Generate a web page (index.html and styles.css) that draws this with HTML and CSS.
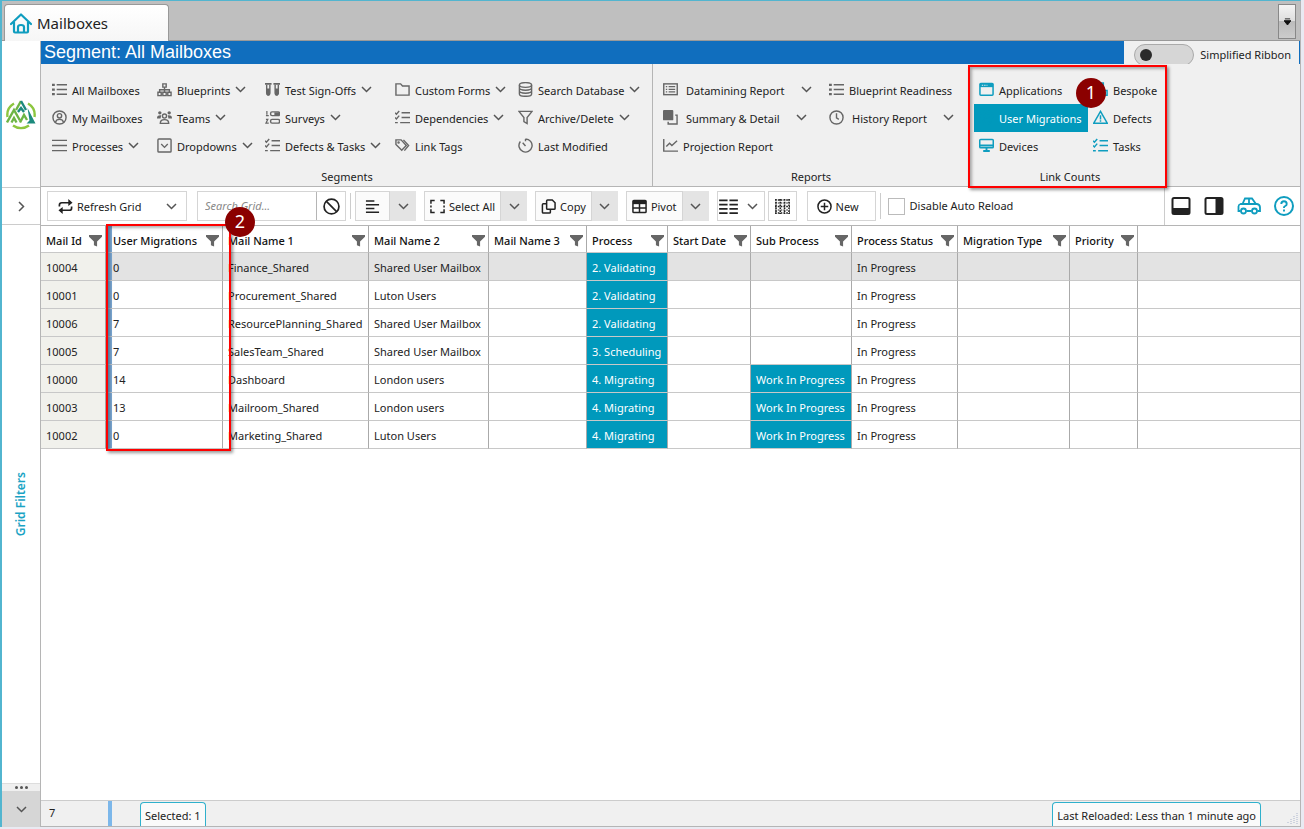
FILE: index.html
```html
<!DOCTYPE html>
<html lang="en">
<head>
  <meta charset="UTF-8">
  <meta name="viewport" content="width=device-width, initial-scale=1.0">
  <title>Mailboxes</title>
  <link rel="stylesheet" href="styles.css">
</head>
<body>
  <!-- icon sprite -->
  <svg class="sprite" aria-hidden="true">
    <symbol id="chev" viewBox="0 0 11 11"><path d="M1 3l4.500 4.500L10 3"/></symbol>
    <symbol id="list" viewBox="0 0 16 16"><path d="M5 3h11M5 8h11M5 13h11"/><path d="M0 3h3M0 8h3M0 13h3" stroke-width="2.400"/></symbol>
    <symbol id="lines" viewBox="0 0 16 16"><path d="M0 2.500h16M0 8h16M0 13.500h16"/></symbol>
    <symbol id="user" viewBox="0 0 16 16"><circle cx="8" cy="8" r="7"/><circle cx="8" cy="6.200" r="2.300"/><path d="M3.800 13c.4-2 1.600-3 4.200-3s3.800 1 4.200 3"/></symbol>
    <symbol id="tree" viewBox="0 0 16 16"><path d="M6.200 2h3.600v3.500H6.200zM1 11h3.500v3.500H1zM6.200 11h3.600v3.500H6.200zM11.500 11H15v3.500h-3.500zM8 5.500V11M2.800 11V8.300h10.400V11"/></symbol>
    <symbol id="team" viewBox="0 0 16 16"><g class="solid"><circle cx="3" cy="3" r="1.800"/><circle cx="13" cy="3" r="1.800"/><path d="M0 9c0-2.500 1-3.500 4.500-3.300L3.800 9zM16 9c0-2.500-1-3.500-4.500-3.300L12.200 9z"/></g><circle cx="8" cy="6.500" r="2.200"/><path d="M3.500 14.300c0-3 1.500-4 4.500-4s4.500 1 4.500 4z"/></symbol>
    <symbol id="drop" viewBox="0 0 16 16"><rect x="1" y="1" width="14" height="14" rx="1"/><path d="M4.500 6.500L8 10l3.500-3.500"/></symbol>
    <symbol id="tubes" viewBox="0 0 16 16"><path d="M0 2h7M9 2h7" stroke-width="2"/><path d="M1.800 3v9a1.700 1.700 0 003.400 0V3M10.800 3v9a1.700 1.700 0 003.400 0V3"/><path class="solid" d="M1.800 7h3.400v6a1.700 1.700 0 01-3.400 0zM10.800 7h3.400v6a1.700 1.700 0 01-3.400 0z"/></symbol>
    <symbol id="survey" viewBox="0 0 16 16"><path d="M2 1v4M1 6h3M1 10h2l-2 4h3" stroke-width="1.300"/><rect x="6" y="2" width="9.500" height="4" rx="1.500"/><path d="M10 4h5" stroke-width="3"/><rect x="6" y="10" width="9.500" height="4" rx="1.500"/></symbol>
    <symbol id="check" viewBox="0 0 16 16"><path d="M0 3l1.500 1.500L4.500 1M0 8l1.500 1.500L4.500 6M0 13.500h3M7 3h9M7 8h9M5.500 13.500H16"/></symbol>
    <symbol id="folder" viewBox="0 0 16 16"><path d="M1 14V2h5l2 2.300h7V14z"/></symbol>
    <symbol id="tags" viewBox="0 0 16 16"><path d="M1 2h5.500l5.500 6-4.800 5L1 7zM9 2l5.500 6-4.500 5.500"/><circle cx="3.800" cy="4.800" r=".6"/></symbol>
    <symbol id="db" viewBox="0 0 16 16"><ellipse cx="8" cy="3.200" rx="6.500" ry="2.500"/><path d="M1.500 3.200v9.600c0 3.300 13 3.300 13 0V3.200M1.500 6.500c0 3 13 3 13 0M1.500 9.700c0 3 13 3 13 0"/></symbol>
    <symbol id="funnel" viewBox="0 0 16 16"><path d="M1 1.500h14L9.700 8v6.500l-3.400-2V8z"/></symbol>
    <symbol id="timer" viewBox="0 0 16 16"><path d="M8 1a7 7 0 11-5.500 2.700M8 1v2.500M5 5l3 3.500"/></symbol>
    <symbol id="report" viewBox="0 0 16 16"><rect x=".8" y="2" width="14.400" height="11.500"/><path d="M6 5h7M6 7.800h7M6 10.600h7M3 5h1.500M3 7.800h1.500M3 10.600h1.500" stroke-width="1.300"/></symbol>
    <symbol id="stack" viewBox="0 0 16 16"><rect class="solid" x="0" y="0" width="11" height="11" rx="1"/><path d="M13 5.500h2V15H5.500v-2.500"/></symbol>
    <symbol id="chart" viewBox="0 0 16 16"><path d="M.8 1v13H16M3.500 9l3.500-3.500L9.500 8 15 3"/></symbol>
    <symbol id="clock" viewBox="0 0 16 16"><circle cx="8" cy="8" r="7"/><path d="M8 3.500V8.500l2.500 1.500"/></symbol>
    <symbol id="window" viewBox="0 0 16 16"><rect x="1" y="1.500" width="14" height="12.500" rx="1"/><path d="M1 3.500h14" stroke-width="4"/><path d="M3 3.500h6" stroke="#f0f0f0" stroke-width="1" stroke-dasharray="1.500 1"/></symbol>
    <symbol id="monitor" viewBox="0 0 16 16"><rect x=".8" y="1.500" width="14.400" height="9" rx="1"/><path d="M1 8h14M4.500 13.800h7M8 10.500v3" stroke-width="2"/></symbol>
    <symbol id="blocks" viewBox="0 0 16 16"><path d="M5 1h6v6H5zM1 9h6v5H1zM9 9h6v5H9z"/></symbol>
    <symbol id="warn" viewBox="0 0 16 16"><path d="M8 1.500L15.200 14H.8zM8 5.500v4.500M8 11v1.500" stroke-width="1.600"/></symbol>
    <symbol id="filter" viewBox="0 0 14 14"><path class="solid" d="M0 1h14v2L8.700 8v5.500l-3.400-1.500V8L0 3z"/></symbol>
    <symbol id="refresh" viewBox="0 0 16 16"><path d="M1.500 8V6.500q0-2.500 2.500-2.500h8M14.500 8v1.500q0 2.500-2.500 2.500H4" stroke-width="1.800"/><path class="solid" d="M11 0l4.500 4L11 7.500zM5 8.500L.5 12 5 16z"/></symbol>
    <symbol id="ban" viewBox="0 0 16 16"><circle cx="8" cy="8" r="7"/><path d="M3 3l10 10"/></symbol>
    <symbol id="align" viewBox="0 0 16 16"><path d="M1 2h9M1 6h14M1 10h9M1 14h14"/></symbol>
    <symbol id="expand" viewBox="0 0 16 16"><path d="M1 5V1.500h4M11 1.500h4V5M15 11v3.500h-4M5 14.500H1V11M1 7v2M15 7v2"/></symbol>
    <symbol id="copy" viewBox="0 0 16 16"><path d="M7 1h5l3 3v6q0 1-1 1H7q-1 0-1-1V2q0-1 1-1zM6 5H2.500q-1 0-1 1v8q0 1 1 1H9q1 0 1-1v-3"/></symbol>
    <symbol id="pivot" viewBox="0 0 16 16"><rect x="1" y="1.500" width="14" height="13" rx="1"/><path d="M1 3.500h14" stroke-width="4"/><path d="M8 4v10M1 9.500h14"/></symbol>
    <symbol id="cols" viewBox="0 0 20 16"><path d="M0 1.500h9M11 1.500h9M0 6h9M11 6h9M0 10.500h9M11 10.500h9M0 15h9M11 15h9" stroke-width="1.800"/></symbol>
    <symbol id="dots" viewBox="0 0 15 15"><path d="M0 1h15M0 7.500h15M0 14h15M1 0v15M5.300 0v15M9.600 0v15M14 0v15" stroke-width="1.600" stroke-dasharray="1.700 1.100"/><path d="M0 4h15M0 11h15" stroke-width="1" stroke-dasharray="1.700 1.100"/></symbol>
    <symbol id="plus" viewBox="0 0 16 16"><circle cx="8" cy="8" r="7"/><path d="M8 4v8M4 8h8"/></symbol>
    <symbol id="panel-b" viewBox="0 0 20 20"><rect x="1.500" y="2" width="17" height="16" rx="1.500" stroke-width="2"/><path class="solid" d="M1.500 12h17v6h-17z"/></symbol>
    <symbol id="panel-r" viewBox="0 0 20 20"><rect x="1.500" y="2" width="17" height="16" rx="1.500" stroke-width="2"/><path class="solid" d="M11.500 2h7v16h-7z"/></symbol>
    <symbol id="car" viewBox="0 0 24 18"><path d="M3.500 14H1.500V9.500q0-2 2-2.500h2L8 1.500h7L19 7h1q3 .5 3 3.500V14h-2.500M9.500 14h5M5 7h14M12 1.500V7" stroke-width="1.800"/><circle cx="6.500" cy="14" r="2.500" stroke-width="1.800"/><circle cx="17.500" cy="14" r="2.500" stroke-width="1.800"/></symbol>
    <symbol id="help" viewBox="0 0 20 20"><circle cx="10" cy="10" r="9" stroke-width="2"/><path d="M7.300 8q0-2.700 2.700-2.700T12.700 8q0 1.300-1.400 2T10 11.500v.5M10 13.500v2" stroke-width="1.900"/></symbol>
  </svg>

  <div class="window">
    <header class="tabbar">
      <a class="tab" href="#">
        <svg class="home" viewBox="0 0 22 22"><path d="M1 12L11 2.500 21 12M4 10v9.500q0 1 1 1h12q1 0 1-1V10M8 20v-5q0-2 3-2t3 2v5"/></svg>
        Mailboxes
      </a>
      <button class="tab-menu" aria-label="Open tabs"><svg viewBox="0 0 8 8"><path d="M1 1h6M0 3h8L4 8z"/></svg></button>
    </header>

    <div class="layout">
      <aside class="rail">
        <div class="logo">
          <svg viewBox="0 0 30 32">
            <path class="lime" d="M1.500 19A13.500 13.500 0 018 5.500M22 5.500A13.500 13.500 0 0128.500 19M7 27.500a13.500 13.500 0 0016 0"/>
            <path class="green" d="M1 24.500L8 12l6 10.500M5.500 24.500L8 20l2.500 4.500"/>
            <path class="green" d="M10 12l5-9M14 24.500l4-7.500 3 5"/>
            <path class="teal" d="M15 3l5 9M12 14l3-4 3 4"/>
            <path class="teal-fill" d="M21.500 10L29.500 25.500h-9l3-3z"/>
          </svg>
        </div>
        <button class="rail-btn" aria-label="Expand"><svg class="ico chev next"><use href="#chev"/></svg></button>
        <button class="rail-filters"><span>Grid Filters</span></button>
        <div class="rail-dots"><i></i><i></i><i></i></div>
        <button class="rail-bottom" aria-label="More"><svg class="ico chev"><use href="#chev"/></svg></button>
      </aside>

      <main>
        <div class="banner">
          <h1>Segment: All Mailboxes</h1>
          <label class="simple"><input type="checkbox" role="switch">Simplified Ribbon</label>
        </div>

        <div class="ribbon">
          <section class="group segments">
            <div class="items">
              <button class="item"><svg class="ico"><use href="#list"/></svg>All Mailboxes</button>
              <button class="item"><svg class="ico"><use href="#tree"/></svg>Blueprints<svg class="ico chev"><use href="#chev"/></svg></button>
              <button class="item"><svg class="ico"><use href="#tubes"/></svg>Test Sign-Offs<svg class="ico chev"><use href="#chev"/></svg></button>
              <button class="item"><svg class="ico"><use href="#folder"/></svg>Custom Forms<svg class="ico chev"><use href="#chev"/></svg></button>
              <button class="item"><svg class="ico"><use href="#db"/></svg>Search Database<svg class="ico chev"><use href="#chev"/></svg></button>

              <button class="item"><svg class="ico"><use href="#user"/></svg>My Mailboxes</button>
              <button class="item"><svg class="ico"><use href="#team"/></svg>Teams<svg class="ico chev"><use href="#chev"/></svg></button>
              <button class="item"><svg class="ico"><use href="#survey"/></svg>Surveys<svg class="ico chev"><use href="#chev"/></svg></button>
              <button class="item"><svg class="ico"><use href="#check"/></svg>Dependencies<svg class="ico chev"><use href="#chev"/></svg></button>
              <button class="item"><svg class="ico"><use href="#funnel"/></svg>Archive/Delete<svg class="ico chev"><use href="#chev"/></svg></button>

              <button class="item"><svg class="ico"><use href="#lines"/></svg>Processes<svg class="ico chev"><use href="#chev"/></svg></button>
              <button class="item"><svg class="ico"><use href="#drop"/></svg>Dropdowns<svg class="ico chev"><use href="#chev"/></svg></button>
              <button class="item"><svg class="ico"><use href="#check"/></svg>Defects &amp; Tasks<svg class="ico chev"><use href="#chev"/></svg></button>
              <button class="item"><svg class="ico"><use href="#tags"/></svg>Link Tags</button>
              <button class="item"><svg class="ico"><use href="#timer"/></svg>Last Modified</button>
            </div>
            <h2>Segments</h2>
          </section>

          <section class="group reports">
            <div class="items">
              <button class="item wide"><svg class="ico"><use href="#report"/></svg>Datamining Report<svg class="ico chev"><use href="#chev"/></svg></button>
              <button class="item"><svg class="ico"><use href="#list"/></svg>Blueprint Readiness</button>
              <button class="item wide"><svg class="ico"><use href="#stack"/></svg>Summary &amp; Detail<svg class="ico chev"><use href="#chev"/></svg></button>
              <button class="item wide"><svg class="ico"><use href="#clock"/></svg>History Report<svg class="ico chev"><use href="#chev"/></svg></button>
              <button class="item"><svg class="ico"><use href="#chart"/></svg>Projection Report</button>
            </div>
            <h2>Reports</h2>
          </section>

          <section class="group links">
            <div class="items">
              <button class="item"><svg class="ico"><use href="#window"/></svg>Applications</button>
              <button class="item"><svg class="ico"><use href="#blocks"/></svg>Bespoke</button>
              <button class="item selected"><svg class="ico"><use href="#user"/></svg>User Migrations</button>
              <button class="item"><svg class="ico"><use href="#warn"/></svg>Defects</button>
              <button class="item"><svg class="ico"><use href="#monitor"/></svg>Devices</button>
              <button class="item"><svg class="ico"><use href="#check"/></svg>Tasks</button>
            </div>
            <h2>Link Counts</h2>
            <div class="callout"><span class="badge badge-one">1</span></div>
          </section>
        </div>

        <div class="toolbar">
          <button class="tool refresh"><svg class="ico dark"><use href="#refresh"/></svg>Refresh Grid<svg class="ico chev"><use href="#chev"/></svg></button>
          <div class="search">
            <input type="text" placeholder="Search Grid..." aria-label="Search Grid">
            <button class="clear" aria-label="Clear search"><svg class="ico dark"><use href="#ban"/></svg></button>
          </div>
          <span class="sep"></span>
          <div class="split">
            <button class="tool icon-only" aria-label="Align"><svg class="ico dark"><use href="#align"/></svg></button>
            <button class="more" aria-label="Align options"><svg class="ico chev"><use href="#chev"/></svg></button>
          </div>
          <div class="split">
            <button class="tool"><svg class="ico dark"><use href="#expand"/></svg>Select All</button>
            <button class="more" aria-label="Select options"><svg class="ico chev"><use href="#chev"/></svg></button>
          </div>
          <div class="split">
            <button class="tool"><svg class="ico dark"><use href="#copy"/></svg>Copy</button>
            <button class="more" aria-label="Copy options"><svg class="ico chev"><use href="#chev"/></svg></button>
          </div>
          <div class="split">
            <button class="tool"><svg class="ico dark"><use href="#pivot"/></svg>Pivot</button>
            <button class="more" aria-label="Pivot options"><svg class="ico chev"><use href="#chev"/></svg></button>
          </div>
          <div class="pair">
            <button class="tool columns" aria-label="Columns"><svg class="ico dark"><use href="#cols"/></svg><svg class="ico chev"><use href="#chev"/></svg></button>
            <button class="tool square" aria-label="Grid lines"><svg class="ico dark"><use href="#dots"/></svg></button>
          </div>
          <button class="tool new"><svg class="ico dark"><use href="#plus"/></svg>New</button>
          <span class="sep"></span>
          <label class="auto"><input type="checkbox">Disable Auto Reload</label>
          <div class="tool-right">
            <button aria-label="Bottom panel"><svg class="ico dark big"><use href="#panel-b"/></svg></button>
            <button aria-label="Side panel"><svg class="ico dark big"><use href="#panel-r"/></svg></button>
            <button aria-label="Vehicle"><svg class="ico car"><use href="#car"/></svg></button>
            <button aria-label="Help"><svg class="ico blue big"><use href="#help"/></svg></button>
          </div>
        </div>

        <div class="grid">
          <table>
            <colgroup>
              <col class="c-id"><col class="c-um"><col class="c-n1"><col class="c-n2"><col class="c-n3"><col class="c-proc"><col class="c-start"><col class="c-sub"><col class="c-status"><col class="c-type"><col class="c-pri"><col>
            </colgroup>
            <thead>
              <tr>
                <th><div>Mail Id<svg class="ico fil"><use href="#filter"/></svg></div></th>
                <th class="um"><div>User Migrations<svg class="ico fil"><use href="#filter"/></svg></div></th>
                <th><div>Mail Name 1<svg class="ico fil"><use href="#filter"/></svg></div></th>
                <th><div>Mail Name 2<svg class="ico fil"><use href="#filter"/></svg></div></th>
                <th><div>Mail Name 3<svg class="ico fil"><use href="#filter"/></svg></div></th>
                <th><div>Process<svg class="ico fil"><use href="#filter"/></svg></div></th>
                <th><div>Start Date<svg class="ico fil"><use href="#filter"/></svg></div></th>
                <th><div>Sub Process<svg class="ico fil"><use href="#filter"/></svg></div></th>
                <th><div>Process Status<svg class="ico fil"><use href="#filter"/></svg></div></th>
                <th><div>Migration Type<svg class="ico fil"><use href="#filter"/></svg></div></th>
                <th><div>Priority<svg class="ico fil"><use href="#filter"/></svg></div></th>
                <th></th>
              </tr>
            </thead>
            <tbody>
              <tr class="current"><td class="id">10004</td><td class="um">0</td><td>Finance_Shared</td><td>Shared User Mailbox</td><td></td><td class="fill">2. Validating</td><td></td><td></td><td>In Progress</td><td></td><td></td><td></td></tr>
              <tr><td class="id">10001</td><td class="um">0</td><td>Procurement_Shared</td><td>Luton Users</td><td></td><td class="fill">2. Validating</td><td></td><td></td><td>In Progress</td><td></td><td></td><td></td></tr>
              <tr><td class="id">10006</td><td class="um">7</td><td>ResourcePlanning_Shared</td><td>Shared User Mailbox</td><td></td><td class="fill">2. Validating</td><td></td><td></td><td>In Progress</td><td></td><td></td><td></td></tr>
              <tr><td class="id">10005</td><td class="um">7</td><td>SalesTeam_Shared</td><td>Shared User Mailbox</td><td></td><td class="fill">3. Scheduling</td><td></td><td></td><td>In Progress</td><td></td><td></td><td></td></tr>
              <tr><td class="id">10000</td><td class="um">14</td><td>Dashboard</td><td>London users</td><td></td><td class="fill">4. Migrating</td><td></td><td class="fill">Work In Progress</td><td>In Progress</td><td></td><td></td><td></td></tr>
              <tr><td class="id">10003</td><td class="um">13</td><td>Mailroom_Shared</td><td>London users</td><td></td><td class="fill">4. Migrating</td><td></td><td class="fill">Work In Progress</td><td>In Progress</td><td></td><td></td><td></td></tr>
              <tr><td class="id">10002</td><td class="um">0</td><td>Marketing_Shared</td><td>Luton Users</td><td></td><td class="fill">4. Migrating</td><td></td><td class="fill">Work In Progress</td><td>In Progress</td><td></td><td></td><td></td></tr>
            </tbody>
          </table>
          <div class="callout callout-grid"><span class="badge badge-two">2</span></div>
        </div>

        <footer class="status">
          <span class="count">7</span>
          <span class="note">Selected: 1</span>
          <span class="note last">Last Reloaded: Less than 1 minute ago</span>
          <svg class="grip" viewBox="0 0 12 12"><path d="M10 1v11M7 4v8M4 7v5M1 10v2"/></svg>
        </footer>
      </main>
    </div>
  </div>
</body>
</html>
```
FILE: styles.css
```css
* {
  box-sizing: border-box;
}

body {
  margin: 0;
  height: 100vh;
  display: flex;
  padding: 0 3px 2px 0;
  background: #e9eaf2;
  font-family: "Noto Sans", "Open Sans", sans-serif;
  font-size: 11px;
  line-height: 16px;
  color: #222;
}

button, input {
  font: inherit;
  color: inherit;
}
button {
  display: flex;
  align-items: center;
  padding: 0;
  border: none;
  background: none;
  white-space: nowrap;
  cursor: pointer;
}

.sprite {
  position: absolute;
  width: 0;
  height: 0;
}
.ico {
  width: 15px;
  height: 15px;
  flex: none;
  fill: none;
  stroke: #666;
  stroke-width: 1.5;
  color: #666;
}
.solid {
  fill: currentColor;
  stroke: none;
}
.ico.chev {
  width: 11px;
  height: 11px;
  stroke: #555;
}
.ico.dark {
  stroke: #222;
  color: #222;
  stroke-width: 1.6;
}
.ico.big {
  width: 20px;
  height: 20px;
}
.ico.blue, .ico.car {
  stroke: #0f9dbf;
}
.ico.car {
  width: 24px;
  height: 18px;
}

.window {
  flex: 1;
  min-width: 0;
  display: flex;
  flex-direction: column;
  border-left: 2px solid #52b5cf;
  border-top: 1px solid #52b5cf;
  border-right: 1px solid #b5b5b5;
  background: #fff;
}

/* tabs */
.tabbar {
  display: flex;
  justify-content: space-between;
  height: 40px;
  padding: 3px 4px 0 2px;
  background: #bfbfbf;
  border-bottom: 1px solid #999;
}
.tab {
  display: flex;
  align-items: center;
  gap: 5px;
  width: 165px;
  height: 37px;
  padding: 0 6px 0 5px;
  border: 1px solid #999;
  border-bottom: none;
  border-radius: 4px 4px 0 0;
  background: linear-gradient(#fff, #f6f6f6);
  color: #222;
  font-size: 15px;
  text-decoration: none;
}
.home {
  width: 22px;
  height: 22px;
  fill: none;
  stroke: #0f9dbf;
  stroke-width: 2.2;
  stroke-linejoin: round;
  stroke-linecap: round;
}
.tab-menu {
  width: 18px;
  height: 35px;
  justify-content: center;
  border: 1px solid #888;
  background: linear-gradient(#f4f4f4, #ddd 50%, #bbb 50%, #ccc);
}
.tab-menu svg {
  width: 7px;
  height: 7px;
  fill: #111;
  stroke: #111;
}

.layout {
  flex: 1;
  min-height: 0;
  display: grid;
  grid-template-columns: 39px 1fr;
}

/* left rail */
.rail {
  display: flex;
  flex-direction: column;
  border-right: 1px solid #b5b5b5;
}
.logo {
  height: 147px;
  display: flex;
  align-items: center;
  justify-content: center;
  border-bottom: 1px solid #ccc;
}
.logo svg {
  width: 30px;
  height: 32px;
  fill: none;
  stroke-width: 2.4;
}
.logo .lime {
  stroke: #8dc63f;
}
.logo .green {
  stroke: #6db544;
}
.logo .teal {
  stroke: #1c8a7d;
}
.logo .teal-fill {
  fill: #1c8a7d;
}
.rail-btn {
  height: 37px;
  justify-content: center;
  border-bottom: 1px solid #ccc;
}
.rail-btn .next {
  transform: rotate(-90deg);
}
.rail-filters {
  flex: 1;
  justify-content: center;
}
.rail-filters span {
  writing-mode: vertical-rl;
  transform: rotate(180deg);
  color: #1aa3c4;
  font-size: 12px;
  font-weight: 600;
}
.rail-dots {
  display: flex;
  align-items: center;
  justify-content: center;
  gap: 2px;
  height: 8px;
  background: #efefef;
  border-top: 1px solid #ddd;
}
.rail-dots i {
  width: 3px;
  height: 3px;
  border-radius: 50%;
  background: #555;
}
.rail-bottom {
  height: 36px;
  justify-content: center;
  background: #d6d6d6;
}

main {
  min-width: 0;
  display: flex;
  flex-direction: column;
}

/* banner */
.banner {
  display: flex;
  height: 23px;
  background: #f0f0f0;
  border-right: 1px solid #106ebe;
}
.banner h1 {
  flex: 1;
  margin: 0;
  padding-left: 3px;
  background: #106ebe;
  color: #fff;
  font: 18px/23px "Liberation Sans", Arial, sans-serif;
}
.simple {
  display: flex;
  align-items: center;
  gap: 6px;
  height: 28px;
  padding: 0 8px 0 10px;
}
.simple input {
  appearance: none;
  display: flex;
  align-items: center;
  width: 60px;
  height: 22px;
  margin: 0;
  padding: 0 5px;
  border: 1px solid #aaa;
  border-radius: 11px;
  background: #d6d6d6;
}
.simple input::before {
  content: '';
  width: 12px;
  height: 12px;
  border-radius: 50%;
  background: #2b2b2b;
}

/* ribbon */
.ribbon {
  display: flex;
  height: 123px;
  background: #f0f0f0;
  border-bottom: 1px solid #b5b5b5;
}
.group {
  position: relative;
  display: flex;
  flex-direction: column;
  justify-content: space-between;
  padding: 12px 0 1px 11px;
}
.group h2 {
  margin: 0;
  font-size: 11px;
  line-height: 16px;
  font-weight: 400;
  text-align: center;
}
.segments h2, .reports h2 {
  padding-right: 10px;
}
.items {
  display: grid;
  grid-auto-rows: 28px;
}
.item {
  gap: 5px;
  padding-top: 2px;
}
.item .ico {
  margin-bottom: 3px;
}
.segments {
  width: 612px;
  border-right: 1px solid #b5b5b5;
}
.segments .items {
  grid-template-columns: 105px 108px 130px 123px 1fr;
}
.reports {
  width: 316px;
  padding-left: 10px;
}
.reports .items {
  grid-template-columns: 166px 1fr;
}
.item.wide {
  gap: 8px;
}
.item.wide .chev {
  margin-left: 8px;
}
.links {
  width: 197px;
  padding-left: 5px;
}
.links .items {
  grid-template-columns: 114px 1fr;
}
.links .item {
  padding-left: 5px;
}
.links .ico {
  stroke: #0f9dbf;
  stroke-width: 1.6;
}
.links .selected {
  background: #0099bc;
  color: #fff;
}
.links .selected .ico {
  stroke: #0099bc;
}

/* numbered callouts */
.callout {
  position: absolute;
  inset: 1px -1px -2px -1px;
  border: 2px solid #f00;
  box-shadow: 2px 2px 3px rgba(0, 0, 0, 0.4), inset 2px 2px 3px rgba(0, 0, 0, 0.3);
  pointer-events: none;
  z-index: 2;
}
.callout-grid {
  inset: -2px auto auto 65px;
  width: 125px;
  height: 227px;
}
.badge {
  position: absolute;
  width: 30px;
  height: 30px;
  border-radius: 50%;
  background: #8b0000;
  color: #fff;
  font-size: 18px;
  line-height: 29px;
  text-align: center;
}
.badge-one {
  top: 11px;
  right: 59px;
}
.badge-two {
  top: -19px;
  right: -26px;
}

/* toolbar */
.toolbar {
  display: flex;
  align-items: center;
  gap: 8px;
  height: 39px;
  padding-left: 6px;
  border-bottom: 1px solid #b5b5b5;
}
.tool {
  gap: 4px;
  height: 30px;
  padding: 1px 5px 0;
  border: 1px solid #d5d5d5;
  background: #fbfbfb;
}
.refresh {
  width: 140px;
  margin-right: 2px;
  padding: 1px 9px 0 10px;
  background: #fff;
}
.refresh .chev {
  margin-left: auto;
}
.search {
  display: flex;
  width: 149px;
  height: 30px;
  border: 1px solid #d5d5d5;
}
.search input {
  flex: 1;
  min-width: 0;
  padding: 0 7px;
  border: none;
  border-right: 1px solid #b5b5b5;
  font-style: italic;
}
.search input::placeholder {
  color: #888;
}
.clear {
  width: 28px;
  justify-content: center;
}
.clear .ico {
  width: 17px;
  height: 17px;
}
.sep {
  width: 1px;
  height: 26px;
  margin: 0 -4px;
  background: #ccc;
}
.split, .pair {
  display: flex;
}
.icon-only {
  width: 35px;
  justify-content: center;
}
.more {
  width: 26px;
  height: 30px;
  justify-content: center;
  background: #e4e4e4;
}
.pair {
  gap: 3px;
}
.columns {
  width: 48px;
  padding: 0 1px;
  gap: 9px;
  background: #fff;
}
.columns .dark {
  width: 19px;
  height: 15px;
}
.square {
  width: 29px;
  justify-content: center;
  background: #fff;
}
.new {
  width: 69px;
  margin-left: 2px;
  padding: 1px 9px 0;
  background: #fff;
}
.auto {
  display: flex;
  align-items: center;
  gap: 5px;
  padding-left: 3px;
}
.auto input {
  appearance: none;
  width: 17px;
  height: 17px;
  margin: 0;
  border: 1px solid #bbb;
  background: #fff;
}
.tool-right {
  display: flex;
  align-items: center;
  gap: 13px;
  height: 38px;
  margin-left: auto;
  padding: 0 6px;
  border-left: 1px solid #ccc;
}

/* data grid */
.grid {
  position: relative;
  flex: 1;
}
table {
  width: 100%;
  table-layout: fixed;
  border-collapse: separate;
  border-spacing: 0;
}
.c-id { width: 65px; }
.c-um { width: 117px; }
.c-n1 { width: 146px; }
.c-n2 { width: 120px; }
.c-n3 { width: 98px; }
.c-proc { width: 81px; }
.c-start { width: 83px; }
.c-sub { width: 101px; }
.c-status { width: 106px; }
.c-type { width: 112px; }
.c-pri { width: 68px; }
th, td {
  height: 28px;
  padding: 3px 0 0 5px;
  border-right: 1px solid #aaa;
  border-bottom: 1px solid #c8c8c8;
  text-align: left;
  white-space: nowrap;
}
th {
  height: 27px;
  color: #111;
  font-weight: 500;
}
th div {
  display: flex;
  align-items: center;
  justify-content: space-between;
  padding-right: 3px;
}
th:last-child, td:last-child {
  border-right: none;
}
.fil {
  width: 13px;
  height: 13px;
}
.um {
  border-left: 6px solid #7aa7d3;
  padding-left: 1px;
}
.id {
  background: #f1f1ec;
}
.current td:not(.id) {
  background: #e3e3e3;
}
td.fill, .current td.fill {
  background: #0099bc;
  color: #fff;
}

/* status bar */
.status {
  display: flex;
  height: 27px;
  border-top: 1px solid #ccc;
  border-bottom: 1px solid #b5b5b5;
  background: #f0f0f0;
}
.count {
  width: 71px;
  margin-right: 28px;
  padding: 4px 8px;
  border-right: 4px solid #7cb7ea;
}
.note {
  padding: 5px 4px 0;
  margin-top: 1px;
  border: 1px solid #2fb0cc;
  border-bottom: none;
  border-radius: 4px 4px 0 0;
  background: #fafafa;
}
.last {
  margin-left: auto;
}
.grip {
  align-self: flex-end;
  width: 12px;
  height: 12px;
  margin: 0 1px 2px 26px;
  stroke: #aab4cc;
  stroke-dasharray: 1 1;
}
```
